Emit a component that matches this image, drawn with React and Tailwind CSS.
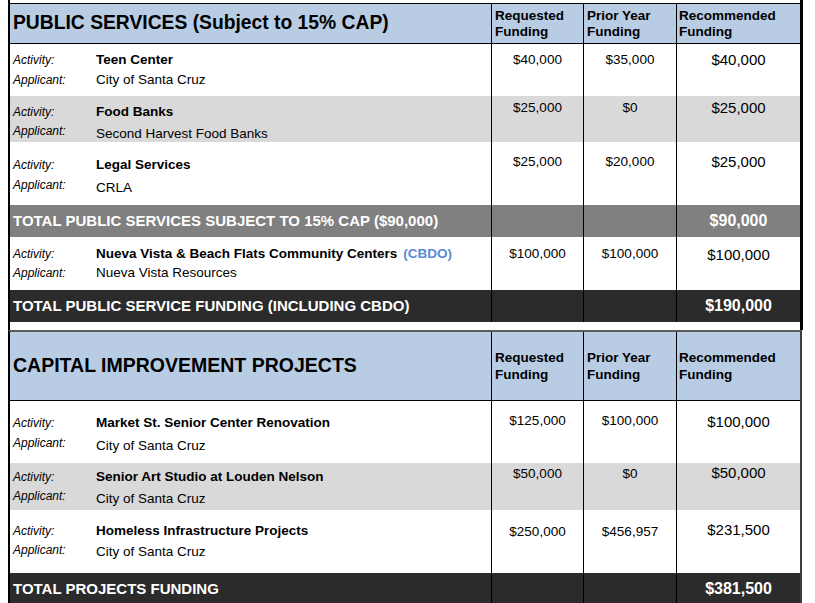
import React from "react";

const publicRows = [
  {
    activity: "Teen Center",
    applicant: "City of Santa Cruz",
    req: "$40,000",
    prior: "$35,000",
    rec: "$40,000",
    row: "h-[52px] bg-white",
    pad: "pt-[8px]",
    gap: "mt-[4px]",
    shift: "pt-0",
    amt: "pt-[8px]",
    recPad: "pt-[7px]",
  },
  {
    activity: "Food Banks",
    applicant: "Second Harvest Food Banks",
    req: "$25,000",
    prior: "$0",
    rec: "$25,000",
    row: "h-[46px] bg-[#d9d9d9]",
    pad: "pt-[8px]",
    gap: "mt-[3px]",
    shift: "pt-[2.5px]",
    amt: "pt-[3.5px]",
    recPad: "pt-[2.5px]",
  },
  {
    activity: "Legal Services",
    applicant: "CRLA",
    req: "$25,000",
    prior: "$20,000",
    rec: "$25,000",
    row: "h-[63px] bg-white",
    pad: "pt-[15px]",
    gap: "mt-[4px]",
    shift: "pt-[2.5px]",
    amt: "pt-[12px]",
    recPad: "pt-[11px]",
  },
];

const cbdoRow = {
  activity: "Nueva Vista & Beach Flats Community Centers",
  tag: "(CBDO)",
  applicant: "Nueva Vista Resources",
  req: "$100,000",
  prior: "$100,000",
  rec: "$100,000",
  row: "h-[53px] bg-white",
  pad: "pt-[9px]",
  gap: "mt-[2.5px]",
  shift: "pt-0",
  amt: "pt-[9px]",
  recPad: "pt-[8.5px]",
};

const capitalRows = [
  {
    activity: "Market St. Senior Center Renovation",
    applicant: "City of Santa Cruz",
    req: "$125,000",
    prior: "$100,000",
    rec: "$100,000",
    row: "h-[62px] bg-white",
    pad: "pt-[14px]",
    gap: "mt-[4px]",
    shift: "pt-[3px]",
    amt: "pt-[12px]",
    recPad: "pt-[11.5px]",
  },
  {
    activity: "Senior Art Studio at Louden Nelson",
    applicant: "City of Santa Cruz",
    req: "$50,000",
    prior: "$0",
    rec: "$50,000",
    row: "h-[47px] bg-[#d9d9d9]",
    pad: "pt-[6px]",
    gap: "mt-[3px]",
    shift: "pt-[3px]",
    amt: "pt-[3px]",
    recPad: "pt-[1px]",
  },
  {
    activity: "Homeless Infrastructure Projects",
    applicant: "City of Santa Cruz",
    req: "$250,000",
    prior: "$456,957",
    rec: "$231,500",
    row: "h-[63px] bg-white",
    pad: "pt-[13px]",
    gap: "mt-[3px]",
    shift: "pt-[2px]",
    amt: "pt-[14px]",
    recPad: "pt-[10.5px]",
  },
];

const cols = "grid grid-cols-[481px_92px_93px_124px]";

const DataRow = ({ r }) => (
  <div className={`${cols} ${r.row}`}>
    <div className={`pl-[3px] ${r.pad}`}>
      <div className="flex leading-[16px]">
        <span className="w-[83px] shrink-0 text-[12px] italic">Activity:</span>
        <span className="text-[13.5px] font-bold">
          {r.activity}
          {r.tag && <span className="ml-[6px] text-[#5b8bd0]">{r.tag}</span>}
        </span>
      </div>
      <div className={`flex leading-[16px] ${r.gap}`}>
        <span className="w-[83px] shrink-0 text-[12px] italic">Applicant:</span>
        <span className={`text-[13.5px] ${r.shift}`}>{r.applicant}</span>
      </div>
    </div>
    <div className={`border-l border-black text-center text-[13.5px] leading-[16px] ${r.amt}`}>
      {r.req}
    </div>
    <div className={`border-l border-black text-center text-[13.5px] leading-[16px] ${r.amt}`}>
      {r.prior}
    </div>
    <div className={`border-l border-black text-center text-[15px] leading-[18px] ${r.recPad}`}>
      {r.rec}
    </div>
  </div>
);

const TotalRow = ({ label, amount, bg }) => (
  <div className={`${cols} h-[32px] ${bg} text-white font-bold`}>
    <div className="flex items-center pl-[3px] text-[15px]">{label}</div>
    <div className="border-l border-black" />
    <div className="border-l border-black" />
    <div className="flex items-center justify-center border-l border-black text-[16px]">
      {amount}
    </div>
  </div>
);

const HeadCols = ({ pad, lead }) => (
  <>
    <div className={`border-l border-black pl-[3px] text-[13.5px] font-bold ${pad} ${lead}`}>
      Requested
      <br />
      Funding
    </div>
    <div className={`border-l border-black pl-[3px] text-[13.5px] font-bold ${pad} ${lead}`}>
      Prior Year
      <br />
      Funding
    </div>
    <div className={`border-l border-black pl-[2px] text-[13.5px] font-bold ${pad} ${lead}`}>
      Recommended
      <br />
      Funding
    </div>
  </>
);

export default function App() {
  return (
    <div className="h-[603px] overflow-hidden bg-white pl-[8px] font-['Liberation_Sans',Arial,sans-serif] text-black">
      {/* public services */}
      <div className="w-[795px] border-l-2 border-r-[3px] border-black">
        <div className="h-[3px]" />
        <div className="h-px bg-black" />
        <div className={`${cols} h-[40px] border-b border-black bg-[#b8cce4]`}>
          <div className="flex items-center pl-[3px] text-[19.3px] font-bold">
            PUBLIC SERVICES (Subject to 15% CAP)
          </div>
          <HeadCols pad="pt-[3.5px]" lead="leading-[16px]" />
        </div>
        {publicRows.map((r) => (
          <DataRow key={r.activity} r={r} />
        ))}
        <TotalRow
          label="TOTAL PUBLIC SERVICES SUBJECT TO 15% CAP ($90,000)"
          amount="$90,000"
          bg="bg-[#808080]"
        />
        <DataRow r={cbdoRow} />
        <TotalRow
          label="TOTAL PUBLIC SERVICE FUNDING (INCLUDING CBDO)"
          amount="$190,000"
          bg="bg-[#2b2b2b]"
        />
        <div className="h-[8px]" />
      </div>

      {/* capital improvement */}
      <div className="w-[794px] border-l-2 border-r-2 border-t-2 border-l-black border-r-[#3c3c3c] border-t-[#595959]">
        <div className={`${cols} h-[69px] border-b border-black bg-[#b8cce4]`}>
          <div className="flex items-center pl-[3px] text-[19.5px] font-bold">
            CAPITAL IMPROVEMENT PROJECTS
          </div>
          <HeadCols pad="pt-[17px]" lead="leading-[17px]" />
        </div>
        {capitalRows.map((r) => (
          <DataRow key={r.activity} r={r} />
        ))}
        <TotalRow label="TOTAL PROJECTS FUNDING" amount="$381,500" bg="bg-[#2b2b2b]" />
      </div>
    </div>
  );
}
